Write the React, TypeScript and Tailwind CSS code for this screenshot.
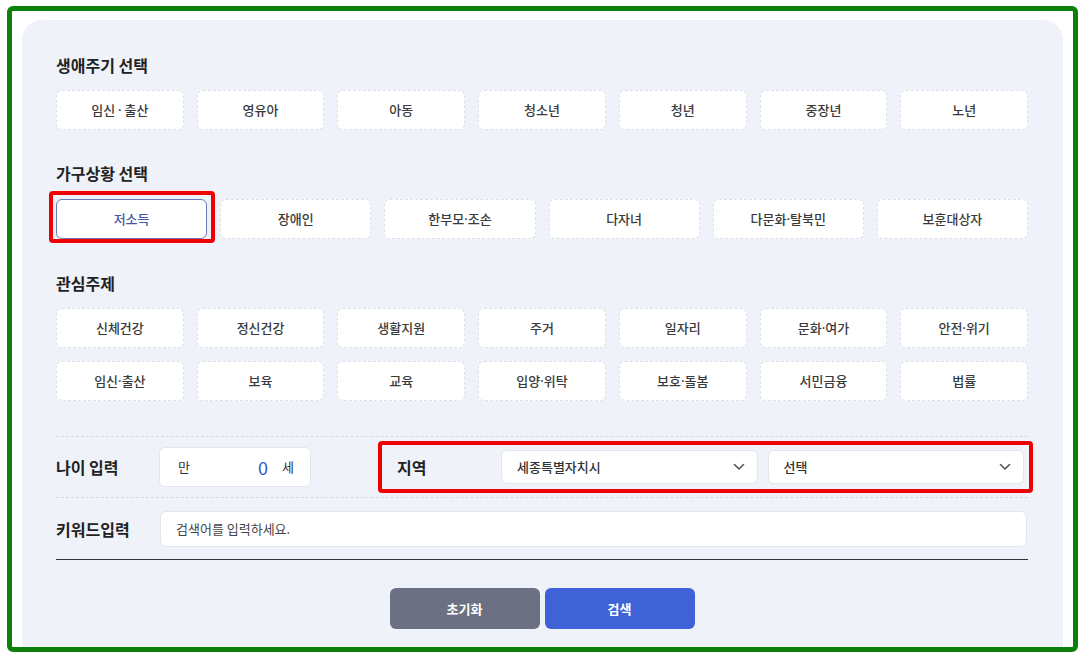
import React from "react";

const font = { fontFamily: '"Noto Sans CJK KR", "Noto Sans", sans-serif' };
const dotFont = { fontFamily: '"Noto Sans", "Liberation Sans", sans-serif' };

function Label({ text }: { text: string }) {
  const parts = text.split("·");
  return (
    <span>
      {parts.map((p, i) => (
        <React.Fragment key={i}>
          {i > 0 && <span style={dotFont}>·</span>}
          {p}
        </React.Fragment>
      ))}
    </span>
  );
}

function Chip({ label, selected = false }: { label: string; selected?: boolean }) {
  return (
    <div
      className={
        selected
          ? "h-[40px] flex items-center justify-center bg-white rounded-[6px] border border-[#6f7bb8] text-[13px] font-medium text-[#4656a6]"
          : "h-[40px] flex items-center justify-center bg-white rounded-[6px] border border-dashed border-[#dcdfe7] text-[13px] font-medium text-[#3a3a3a]"
      }
    >
      <Label text={label} />
    </div>
  );
}

function Chevron() {
  return (
    <svg width="12" height="8" viewBox="0 0 12 8" fill="none">
      <path d="M1.5 1.5 L6 6 L10.5 1.5" stroke="#555" strokeWidth="1.6" strokeLinecap="round" strokeLinejoin="round" />
    </svg>
  );
}

export default function App() {
  const life = ["임신 · 출산", "영유아", "아동", "청소년", "청년", "중장년", "노년"];
  const house = ["저소득", "장애인", "한부모·조손", "다자녀", "다문화·탈북민", "보훈대상자"];
  const topics = [
    "신체건강", "정신건강", "생활지원", "주거", "일자리", "문화·여가", "안전·위기",
    "임신·출산", "보육", "교육", "입양·위탁", "보호·돌봄", "서민금융", "법률",
  ];
  return (
    <div className="w-[1085px] h-[658px] bg-white pt-[6px] pl-[7px]" style={font}>
      <div className="w-[1071px] h-[646px] border-[5px] border-[#0b800b] rounded-[6px] pt-[9px] pl-[10px] pr-[10px] overflow-hidden">
        <div className="h-[700px] bg-[#f0f2fa] rounded-t-[20px] pt-[33px] pl-[34px] pr-[35px]">
          <h2 className="text-[16px] leading-6 font-bold text-[#222]">생애주기 선택</h2>
          <div className="mt-[13px] grid grid-cols-7 gap-[13px]">
            {life.map((l) => (
              <Chip key={l} label={l} />
            ))}
          </div>

          <h2 className="mt-[31px] text-[16px] leading-6 font-bold text-[#222]">가구상황 선택</h2>
          <div className="mt-[14px] grid grid-cols-6 gap-[13px]">
            {house.map((l, i) =>
              i === 0 ? (
                <div key={l} className="relative">
                  <Chip label={l} selected />
                  <div className="absolute left-[-7px] right-[-8px] top-[-8px] bottom-[-4px] border-[4px] border-[#f00000] rounded-[4px] pointer-events-none" />
                </div>
              ) : (
                <Chip key={l} label={l} />
              )
            )}
          </div>

          <h2 className="mt-[32px] text-[16px] leading-6 font-bold text-[#222]">관심주제</h2>
          <div className="mt-[13px] grid grid-cols-7 gap-[13px]">
            {topics.map((l) => (
              <Chip key={l} label={l} />
            ))}
          </div>

          <div className="mt-[35px] h-[62px] border-y border-dashed border-[#d6dae4] flex items-center">
            <div className="w-[103px] text-[16px] font-bold text-[#222]">나이 입력</div>
            <div className="w-[152px] h-[40px] bg-white rounded-[6px] border border-[#e3e6ee] flex items-center pl-[18px] pr-[16px] text-[13px] text-[#333]">
              <span>만</span>
              <span className="flex-1 text-right text-[18px] text-[#3b54c8]">0</span>
              <span className="ml-[14px]">세</span>
            </div>
            <div className="relative ml-[67px] mr-[-5px] flex-1 h-[52px] flex items-center pl-[19px] pr-[9px]">
              <div className="absolute inset-0 border-[4px] border-[#f00000] rounded-[4px] pointer-events-none" />
              <div className="w-[104px] text-[16px] font-bold text-[#222]">지역</div>
              <div className="flex-1 h-[34px] bg-white rounded-[6px] border border-[#e3e6ee] flex items-center justify-between pl-[15px] pr-[12px] text-[13px] font-medium text-[#333]">
                <span>세종특별자치시</span>
                <Chevron />
              </div>
              <div className="ml-[10px] flex-1 h-[34px] bg-white rounded-[6px] border border-[#e3e6ee] flex items-center justify-between pl-[15px] pr-[12px] text-[13px] font-medium text-[#333]">
                <span>선택</span>
                <Chevron />
              </div>
            </div>
          </div>

          <div className="h-[62px] border-b border-[#333] flex items-center">
            <div className="w-[104px] text-[16px] font-bold text-[#222]">키워드입력</div>
            <div className="flex-1 mr-[1px] h-[36px] bg-white rounded-[6px] border border-[#e3e6ee] flex items-center pl-[15px] text-[13px] text-[#444]">
              검색어를 입력하세요.
            </div>
          </div>

          <div className="mt-[28px] flex justify-center gap-[5px]">
            <button className="w-[150px] h-[41px] rounded-[6px] bg-[#6c7083] text-white text-[13px] font-bold">초기화</button>
            <button className="w-[150px] h-[41px] rounded-[6px] bg-[#3f63d7] text-white text-[13px] font-bold">검색</button>
          </div>
        </div>
      </div>
    </div>
  );
}
